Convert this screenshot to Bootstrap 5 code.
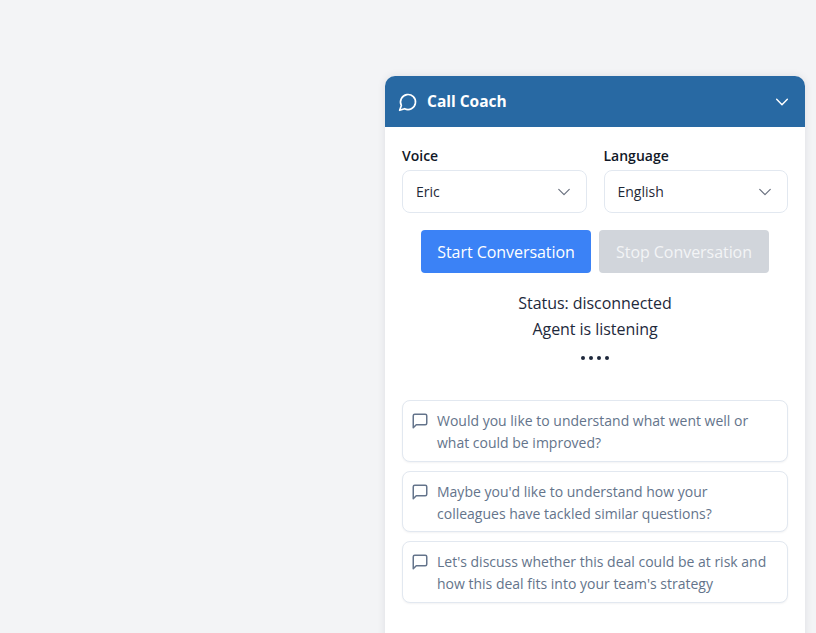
<!DOCTYPE html>
<html lang="en">
<head>
<meta charset="utf-8">
<title>Call Coach</title>
<link rel="stylesheet" href="https://cdn.jsdelivr.net/npm/bootstrap@5.3.0/dist/css/bootstrap.min.css">
<style>
html, body { height: 633px; overflow: hidden; }
body { background: #f3f4f6; color: #111827; font-family: "Open Sans", "Noto Sans", sans-serif; }
.coach-page { padding: 76px 11px 0 0; height: 633px; overflow: hidden; }
.coach-card { width: 420px; height: 620px; flex: none; background: #fff; border-radius: 10px 10px 0 0; overflow: hidden; box-shadow: 0 0 8px rgba(15,23,42,.09); }
.coach-head { height: 51px; flex: none; background: #2869a3; color: #fff; padding: 0 15px 0 13px; }
.coach-title { font-size: 15.5px; font-weight: 700; margin-left: 1px; }
.coach-body { padding: 19px 17px 0 17px; }
.coach-fields { gap: 17px; }
.coach-field { flex: 1 1 0; min-width: 0; }
.coach-label { font-size: 14px; font-weight: 600; line-height: 20px; margin-bottom: 4px; color: #111827; }
.coach-select { height: 43px; font-size: 14px; color: #1f2937; border-color: #e2e8f0; border-radius: 8px; padding: 0 30px 0 13px; background-size: 14px 14px; background-position: right 15px center; background-image: url("data:image/svg+xml,%3csvg xmlns='http://www.w3.org/2000/svg' viewBox='0 0 16 16'%3e%3cpath fill='none' stroke='%236b7280' stroke-linecap='round' stroke-linejoin='round' stroke-width='1.4' d='m2 5 6 6 6-6'/%3e%3c/svg%3e"); }
.coach-actions { margin-top: 17px; }
.coach-btn { width: 170px; height: 43px; font-size: 16px; letter-spacing: -.05px; border: 0; border-radius: 4px; color: #fff; padding: 0; }
.coach-btn-start, .coach-btn-start:hover { background: #3b82f6; color: #fff; }
.coach-btn-stop, .coach-btn-stop:disabled { background: #d1d5db; color: #f3f4f6; opacity: 1; }
.coach-status { margin-top: 17px; font-size: 16px; line-height: 26px; color: #1e293b; letter-spacing: -.05px; }
.coach-dots { gap: 4px; margin-top: 14px; height: 4px; }
.coach-dot { width: 4px; height: 4px; border-radius: 50%; background: #1e293b; }
.coach-list { margin-top: 40px; gap: 9px; }
.coach-tip { height: 61.5px; border: 1px solid #e2e8f0; border-radius: 8px; background: #fff; box-shadow: 0 1px 2px rgba(15,23,42,.05); padding: 9px 12px 0 8px; gap: 8px; font-size: 14px; line-height: 22px; color: #64748b; }
.coach-tip svg { flex: none; margin-top: 2px; }
</style>
</head>
<body>
<div class="coach-page d-flex justify-content-end">
  <div class="coach-card d-flex flex-column">
    <div class="coach-head d-flex align-items-center justify-content-between">
      <div class="d-flex align-items-center gap-2">
        <svg width="20" height="20" viewBox="0 0 24 24" fill="none" stroke="#fff" stroke-width="2" stroke-linecap="round" stroke-linejoin="round"><path d="M7.9 20A9 9 0 1 0 4 16.1L2 22Z"/></svg>
        <span class="coach-title">Call Coach</span>
      </div>
      <svg width="16" height="16" viewBox="0 0 24 24" fill="none" stroke="#fff" stroke-width="2.2" stroke-linecap="round" stroke-linejoin="round"><path d="m4 8 8 8 8-8"/></svg>
    </div>
    <div class="coach-body">
      <div class="coach-fields d-flex">
        <div class="coach-field">
          <div class="coach-label">Voice</div>
          <select class="form-select coach-select" aria-label="Voice"><option>Eric</option></select>
        </div>
        <div class="coach-field">
          <div class="coach-label">Language</div>
          <select class="form-select coach-select" aria-label="Language"><option>English</option></select>
        </div>
      </div>
      <div class="coach-actions d-flex justify-content-center gap-2">
        <button type="button" class="btn coach-btn coach-btn-start">Start Conversation</button>
        <button type="button" class="btn coach-btn coach-btn-stop" disabled>Stop Conversation</button>
      </div>
      <div class="coach-status text-center">
        <div>Status: disconnected</div>
        <div>Agent is listening</div>
      </div>
      <div class="coach-dots d-flex justify-content-center">
        <span class="coach-dot"></span><span class="coach-dot"></span><span class="coach-dot"></span><span class="coach-dot"></span>
      </div>
      <div class="coach-list d-flex flex-column">
        <div class="coach-tip d-flex">
          <svg width="18" height="18" viewBox="0 0 24 24" fill="none" stroke="#64748b" stroke-width="2" stroke-linecap="round" stroke-linejoin="round"><path d="M21 15a2 2 0 0 1-2 2H7l-4 4V5a2 2 0 0 1 2-2h14a2 2 0 0 1 2 2z"/></svg>
          <span>Would you like to understand what went well or what could be improved?</span>
        </div>
        <div class="coach-tip d-flex">
          <svg width="18" height="18" viewBox="0 0 24 24" fill="none" stroke="#64748b" stroke-width="2" stroke-linecap="round" stroke-linejoin="round"><path d="M21 15a2 2 0 0 1-2 2H7l-4 4V5a2 2 0 0 1 2-2h14a2 2 0 0 1 2 2z"/></svg>
          <span>Maybe you'd like to understand how your colleagues have tackled similar questions?</span>
        </div>
        <div class="coach-tip d-flex">
          <svg width="18" height="18" viewBox="0 0 24 24" fill="none" stroke="#64748b" stroke-width="2" stroke-linecap="round" stroke-linejoin="round"><path d="M21 15a2 2 0 0 1-2 2H7l-4 4V5a2 2 0 0 1 2-2h14a2 2 0 0 1 2 2z"/></svg>
          <span>Let's discuss whether this deal could be at risk and how this deal fits into your team's strategy</span>
        </div>
      </div>
    </div>
  </div>
</div>
<script src="https://cdn.jsdelivr.net/npm/bootstrap@5.3.0/dist/js/bootstrap.bundle.min.js"></script>
</body>
</html>
